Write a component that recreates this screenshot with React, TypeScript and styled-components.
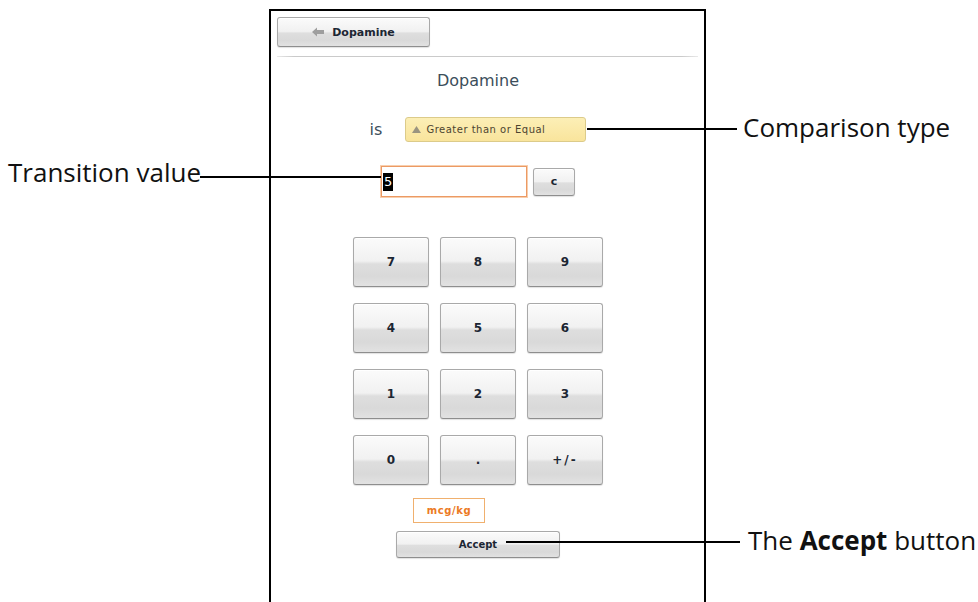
import React from "react";
import styled, { createGlobalStyle } from "styled-components";

const GlobalStyle = createGlobalStyle`
  html, body { margin: 0; padding: 0; background: #ffffff; }
  body { overflow: hidden; }
  * { box-sizing: border-box; }
`;

const Page = styled.div`
  position: relative;
  width: 978px;
  height: 602px;
  padding: 9px 0 0 269px;
  background: #ffffff;
  overflow: hidden;
`;

const Frame = styled.div`
  width: 437px;
  height: 593px;
  border: 2px solid #000;
  border-bottom: none;
  padding: 6px 6px 0;
  display: flex;
  flex-direction: column;
  background: #ffffff;
`;

const GlossButton = styled.button<{ $w: number; $h: number; $size?: number; $spacing?: number }>`
  width: ${(p) => p.$w}px;
  height: ${(p) => p.$h}px;
  padding: 0;
  margin: 0;
  border: 1px solid #a9a9a9;
  border-bottom-color: #8e8e8e;
  border-radius: 3px;
  background: linear-gradient(
    to bottom,
    #fbfbfb 0%,
    #f1f1f1 48%,
    #dedede 54%,
    #d9d9d9 80%,
    #e2e2e2 100%
  );
  box-shadow: inset 0 1px 0 #ffffff, 0 1px 1px rgba(0, 0, 0, 0.12);
  font-family: "DejaVu Sans", Verdana, sans-serif;
  font-weight: bold;
  font-size: ${(p) => p.$size ?? 11}px;
  letter-spacing: ${(p) => p.$spacing ?? 0}px;
  color: #1c2633;
  display: flex;
  align-items: center;
  justify-content: center;
  gap: 8px;
  cursor: pointer;
`;

const Separator = styled.div`
  margin-top: 9px;
  height: 1px;
  background: linear-gradient(
    to right,
    rgba(200, 200, 200, 0.4) 0%,
    #cacaca 4%,
    #cacaca 96%,
    rgba(200, 200, 200, 0.4) 100%
  );
`;

const Content = styled.div`
  display: flex;
  flex-direction: column;
  align-items: center;
  padding-right: 19px;
`;

const Title = styled.div`
  margin-top: 14px;
  height: 20px;
  line-height: 20px;
  font-family: "DejaVu Sans", Verdana, sans-serif;
  font-size: 16px;
  color: #3c4e5b;
`;

const CompareRow = styled.div`
  margin-top: 26px;
  display: flex;
  align-items: center;
  gap: 23px;
`;

const IsLabel = styled.span`
  font-family: "DejaVu Sans", Verdana, sans-serif;
  font-size: 16px;
  color: #3c4e5b;
`;

const Dropdown = styled.div`
  width: 181px;
  height: 25px;
  border: 1px solid #dccb8a;
  border-radius: 3px;
  background: linear-gradient(to bottom, #fcefb6 0%, #f9e49c 100%);
  display: flex;
  align-items: center;
  gap: 5px;
  padding-left: 6px;
  font-family: "DejaVu Sans", Verdana, sans-serif;
  font-size: 10px;
  letter-spacing: 0.5px;
  color: #4d4430;
`;

const InputRow = styled.div`
  margin-top: 24px;
  display: flex;
  align-items: center;
  gap: 6px;
`;

const ValueInput = styled.div`
  width: 146px;
  height: 31px;
  border: 1px solid #ec9a64;
  box-shadow: 0 0 0 1px #f8cfae;
  background: #ffffff;
  display: flex;
  align-items: center;
  padding-left: 1px;
  font-family: "DejaVu Sans", Verdana, sans-serif;
  font-size: 13px;
`;

const Selected = styled.span`
  background: #000;
  color: #fff;
  padding: 1px 1px;
  line-height: 16px;
`;

const Keypad = styled.div`
  margin-top: 40px;
  display: grid;
  grid-template-columns: repeat(3, 76px);
  grid-auto-rows: 50px;
  column-gap: 11px;
  row-gap: 16px;
`;

const UnitRow = styled.div`
  margin-top: 13px;
  width: 250px;
  padding-left: 60px;
`;

const UnitBadge = styled.div`
  width: 72px;
  height: 25px;
  border: 1px solid #f0b06e;
  background: #ffffff;
  display: flex;
  align-items: center;
  justify-content: center;
  font-family: "DejaVu Sans", Verdana, sans-serif;
  font-weight: bold;
  font-size: 10px;
  letter-spacing: 0.6px;
  color: #ec7a24;
`;

const AcceptWrap = styled.div`
  margin-top: 8px;
`;

const CalloutText = styled.div<{ $left: number; $top: number }>`
  position: absolute;
  left: ${(p) => p.$left}px;
  top: ${(p) => p.$top}px;
  font-family: "Open Sans", "Noto Sans", sans-serif;
  font-size: 26px;
  line-height: 26px;
  color: #111;
  white-space: nowrap;
`;

const CalloutLine = styled.div<{ $left: number; $top: number; $width: number }>`
  position: absolute;
  left: ${(p) => p.$left}px;
  top: ${(p) => p.$top}px;
  width: ${(p) => p.$width}px;
  height: 1.5px;
  background: #000;
`;

const BackArrow = () => (
  <svg width="12" height="10" viewBox="0 0 12 10">
    <polygon points="0,5 5,0.5 5,3 12,3 12,7 5,7 5,9.5" fill="#9e9e9e" />
  </svg>
);

const UpTriangle = () => (
  <svg width="9" height="7" viewBox="0 0 9 7">
    <polygon points="4.5,0 9,7 0,7" fill="#9a9480" />
  </svg>
);

const keys = ["7", "8", "9", "4", "5", "6", "1", "2", "3", "0", ".", "+/-"];

export default function App() {
  return (
    <>
      <GlobalStyle />
      <Page>
        <Frame>
          <GlossButton $w={153} $h={30} $size={11}>
            <BackArrow />
            <span>Dopamine</span>
          </GlossButton>
          <Separator />
          <Content>
            <Title>Dopamine</Title>
            <CompareRow>
              <IsLabel>is</IsLabel>
              <Dropdown>
                <UpTriangle />
                <span>Greater than or Equal</span>
              </Dropdown>
            </CompareRow>
            <InputRow>
              <ValueInput>
                <Selected>5</Selected>
              </ValueInput>
              <GlossButton $w={42} $h={28} $size={11}>
                c
              </GlossButton>
            </InputRow>
            <Keypad>
              {keys.map((k) => (
                <GlossButton key={k} $w={76} $h={50} $size={12} $spacing={k.length > 1 ? 2 : 0}>
                  {k}
                </GlossButton>
              ))}
            </Keypad>
            <UnitRow>
              <UnitBadge>mcg/kg</UnitBadge>
            </UnitRow>
            <AcceptWrap>
              <GlossButton $w={164} $h={27} $size={10}>
                Accept
              </GlossButton>
            </AcceptWrap>
          </Content>
        </Frame>

        <CalloutText $left={8} $top={159}>Transition value</CalloutText>
        <CalloutLine $left={200} $top={176} $width={181} />

        <CalloutLine $left={587} $top={128} $width={150} />
        <CalloutText $left={743} $top={114}>Comparison type</CalloutText>

        <CalloutLine $left={506} $top={541} $width={234} />
        <CalloutText $left={748} $top={527}>
          The <b>Accept</b> button
        </CalloutText>
      </Page>
    </>
  );
}
